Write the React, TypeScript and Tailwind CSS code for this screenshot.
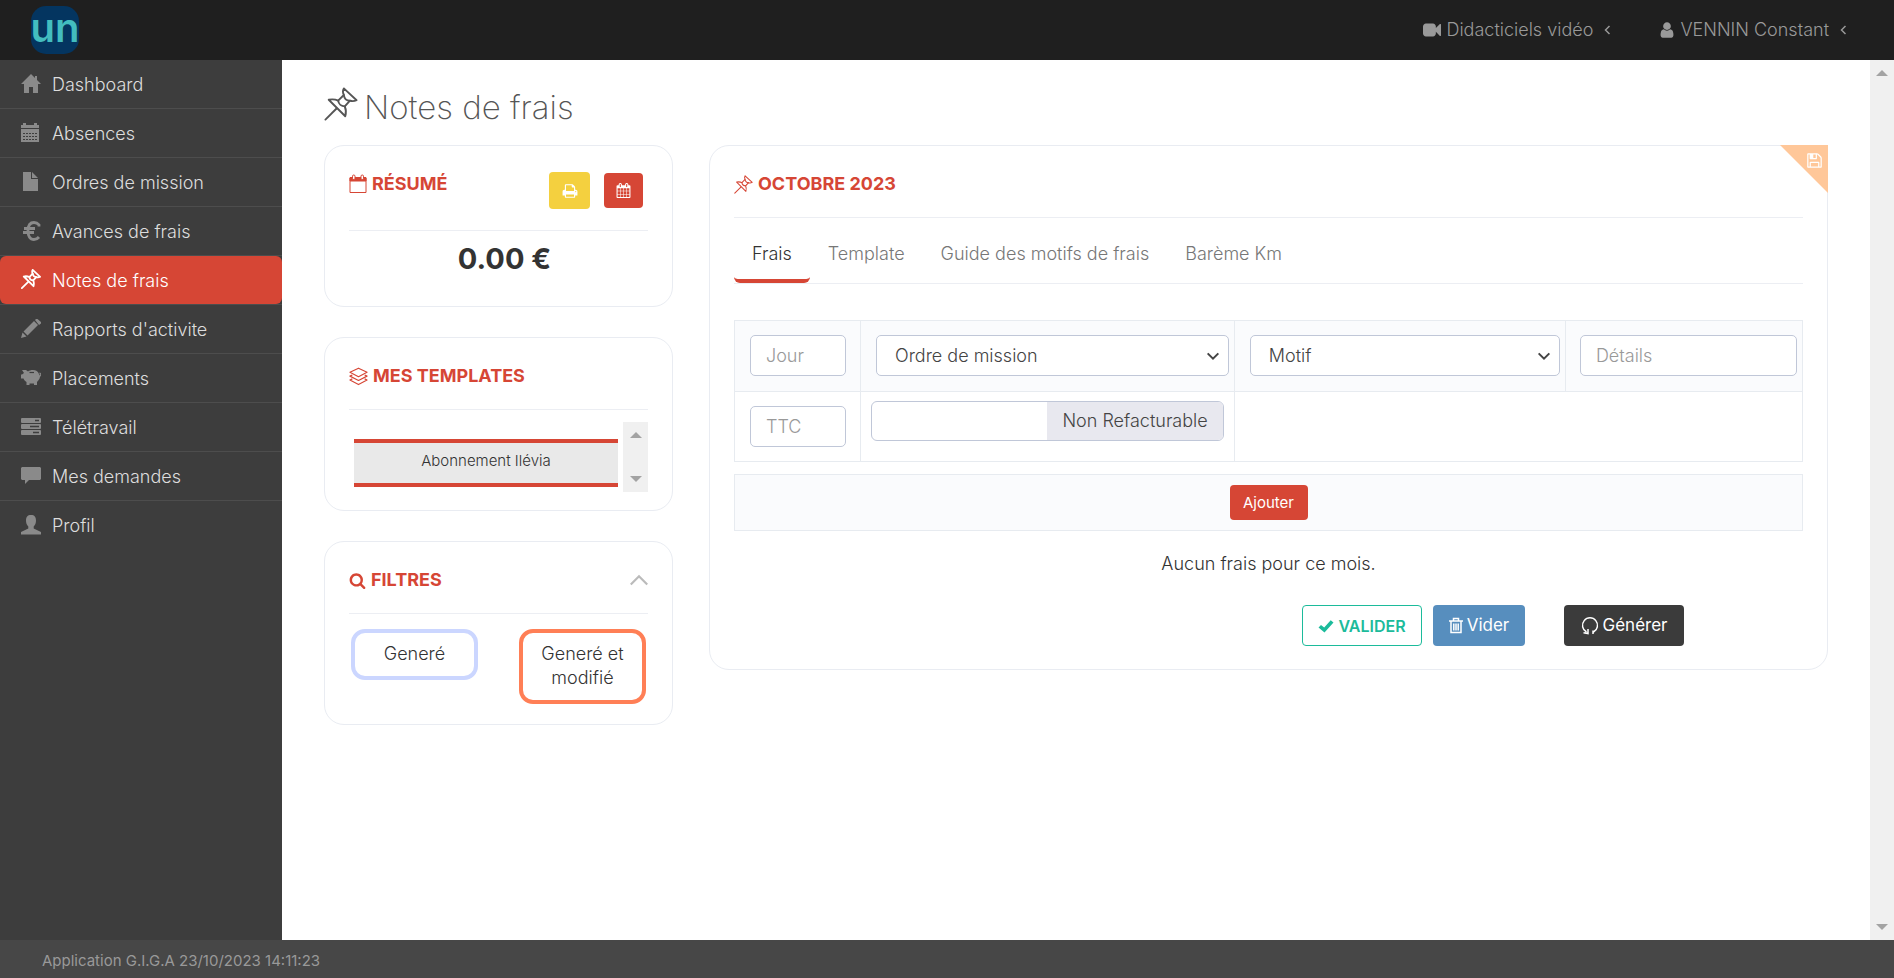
import type { ReactNode } from "react";

type IconProps = { className?: string };

const fa = (d: string) =>
  function FaIcon({ className }: IconProps) {
    return (
      <svg viewBox="0 0 1792 1792" fill="currentColor" aria-hidden="true" className={className}>
        <path d={d} />
      </svg>
    );
  };

const VideoIcon = fa(
  "M1792 352v1088q0 42-39 59-13 5-25 5-27 0-45-19l-403-403v166q0 119-84.500 203.500t-203.500 84.500h-704q-119 0-203.500-84.500t-84.500-203.500v-704q0-119 84.500-203.500t203.500-84.500h704q119 0 203.500 84.500t84.500 203.500v165l403-402q18-19 45-19 12 0 25 5 39 17 39 59z",
);
const UserIcon = fa(
  "M1536 1399q0 109-62.500 187t-150.500 78h-854q-88 0-150.500-78t-62.500-187q0-85 8.500-160.500t31.500-152 58.500-131 94-89 134.500-34.500q131 128 313 128t313-128q76 0 134.500 34.500t94 89 58.500 131 31.500 152 8.500 160.500zm-256-887q0 159-112.500 271.500t-271.500 112.500-271.500-112.500-112.500-271.500 112.500-271.500 271.500-112.500 271.500 112.500 112.500 271.500z",
);
const FloppyIcon = fa(
  "M512 1536h768v-384h-768v384zm896 0h128v-896q0-14-10-38.500t-20-34.500l-281-281q-10-10-34-20t-39-10v416q0 40-28 68t-68 28h-576q-40 0-68-28t-28-68v-416h-128v1280h128v-416q0-40 28-68t68-28h832q40 0 68 28t28 68v416zm-384-928v-320q0-13-9.500-22.500t-22.500-9.500h-192q-13 0-22.500 9.500t-9.500 22.500v320q0 13 9.500 22.500t22.500 9.500h192q13 0 22.500-9.500t9.500-22.500zm640 32v928q0 40-28 68t-68 28h-1344q-40 0-68-28t-28-68v-1344q0-40 28-68t68-28h928q40 0 88 20t76 48l280 280q28 28 48 76t20 88z",
);
const PrintIcon = fa(
  "M448 1536h896v-256h-896v256zm0-640h896v-384h-160q-40 0-68-28t-28-68v-160h-640v640zm1152 64q0-26-19-45t-45-19-45 19-19 45 19 45 45 19 45-19 19-45zm128 0v416q0 13-9.500 22.500t-22.500 9.500h-224v160q0 40-28 68t-68 28h-960q-40 0-68-28t-28-68v-160h-224q-13 0-22.500-9.500t-9.500-22.500v-416q0-79 56.500-135.500t135.500-56.500h64v-544q0-40 28-68t68-28h672q40 0 88 20t76 48l152 152q28 28 48 76t20 88v256h64q79 0 135.500 56.500t56.500 135.500z",
);
const CalendarIcon = fa(
  "M192 1664h288v-288h-288v288zm352 0h320v-288h-320v288zm-352-352h288v-320h-288v320zm352 0h320v-320h-320v320zm-352-384h288v-288h-288v288zm736 736h320v-288h-320v288zm-384-736h320v-288h-320v288zm768 736h288v-288h-288v288zm-384-352h320v-320h-320v320zm-352-864v-288q0-13-9.500-22.500t-22.500-9.500h-64q-13 0-22.500 9.500t-9.500 22.500v288q0 13 9.500 22.500t22.500 9.500h64q13 0 22.500-9.500t9.500-22.500zm736 864h288v-320h-288v320zm-384-384h320v-288h-320v288zm384 0h288v-288h-288v288zm32-480v-288q0-13-9.500-22.500t-22.500-9.500h-64q-13 0-22.500 9.500t-9.500 22.500v288q0 13 9.500 22.500t22.500 9.500h64q13 0 22.500-9.500t9.500-22.500zm384-64v1280q0 52-38 90t-90 38h-1408q-52 0-90-38t-38-90v-1280q0-52 38-90t90-38h128v-96q0-66 47-113t113-47h64q66 0 113 47t47 113v96h384v-96q0-66 47-113t113-47h64q66 0 113 47t47 113v96h128q52 0 90 38t38 90z",
);
const SearchIcon = fa(
  "M1216 832q0-185-131.500-316.500t-316.500-131.500-316.500 131.500-131.500 316.500 131.500 316.500 316.500 131.500 316.500-131.500 131.500-316.500zm512 832q0 52-38 90t-90 38q-54 0-90-38l-343-342q-179 124-399 124-143 0-273.500-55.500t-225-150-150-225-55.500-273.500 55.500-273.500 150-225 225-150 273.500-55.500 273.500 55.500 225 150 150 225 55.500 273.500q0 220-124 399l343 343q37 37 37 90z",
);

function Glyph({ children, className = "size-5" }: { children: ReactNode; className?: string }) {
  return (
    <svg viewBox="0 0 20 20" fill="currentColor" aria-hidden="true" className={className}>
      {children}
    </svg>
  );
}

function PinIcon({ className, weight }: IconProps & { weight: number }) {
  return (
    <svg
      viewBox="0 0 36 36"
      fill="none"
      stroke="currentColor"
      strokeWidth={weight}
      strokeLinejoin="round"
      strokeLinecap="round"
      aria-hidden="true"
      className={className}
    >
      <path d="M1.500 34.500 13 23" />
      <path d="M5 13.500c3.500-.8 7-.5 10 1l6-6c-1.200-2.500-1.200-5 0-7L34.500 14c-2.500 1.200-5 1.200-7 .5l-5.500 6c1.500 3.500 1.500 7 .5 10.500z" />
      <path d="M15 14.500c.5 3.500 3.500 6 7 6M21 8.500c.5 3.500 3 6 6.500 6" />
    </svg>
  );
}

function OutlineCalendarIcon({ className }: IconProps) {
  return (
    <svg viewBox="0 0 18 20" fill="none" stroke="currentColor" aria-hidden="true" className={className}>
      <path d="M1 4h16v14.500H1z" />
      <path d="M1 3.500h16V7H1z" fill="currentColor" />
      <rect x="3.500" y="1" width="2.500" height="4.500" rx="1.200" fill="#fff" />
      <rect x="12" y="1" width="2.500" height="4.500" rx="1.200" fill="#fff" />
    </svg>
  );
}

function SheetsIcon({ className }: IconProps) {
  return (
    <svg viewBox="0 0 20 20" fill="none" stroke="currentColor" strokeWidth="1.200" strokeLinejoin="round" aria-hidden="true" className={className}>
      <path d="M10 1.200 19 5.600 10 10.200 1 5.600z" />
      <path d="M3.500 8.300 1 9.600l9 4.600 9-4.600-2.500-1.300M3.500 12.500 1 13.800l9 4.700 9-4.700-2.500-1.300" />
    </svg>
  );
}

function Chevron({ className, d }: IconProps & { d: string }) {
  return (
    <svg
      viewBox="0 0 24 24"
      fill="none"
      stroke="currentColor"
      strokeWidth={3}
      aria-hidden="true"
      className={className}
    >
      <path d={d} />
    </svg>
  );
}

const menu: { label: string; icon: ReactNode; active?: boolean }[] = [
  {
    label: "Dashboard",
    icon: (
      <Glyph>
        <path d="M10 0 0 10h3v9h5v-6h4v6h5v-9h3l-4-4V2h-2v2z" />
      </Glyph>
    ),
  },
  {
    label: "Absences",
    icon: (
      <Glyph>
        <path d="M0 2h2V0h3v2h8V0h3v2h2v3H0zM0 6h18v13H0z" />
        <path d="M2 10.500h14M2 13.500h14M2 16.500h14" stroke="#3d3d3d" strokeWidth="1" strokeDasharray="2 1" />
      </Glyph>
    ),
  },
  {
    label: "Ordres de mission",
    icon: (
      <Glyph>
        <path d="M2 0h8v7h7v12H2zM11 0l6 6h-6z" />
      </Glyph>
    ),
  },
  {
    label: "Avances de frais",
    icon: (
      <Glyph>
        <path
          d="M18 5.500V3.800C16.500 2 15 1.500 13 1.500 9 1.500 7 5 7 10s2 8.500 6 8.500c2 0 3.500-.7 5-2.500M3 7.500h11M2 11.500h11"
          fill="none"
          stroke="currentColor"
          strokeWidth="2.800"
        />
      </Glyph>
    ),
  },
  { label: "Notes de frais", icon: <PinIcon weight={3.2} className="size-5" />, active: true },
  {
    label: "Rapports d'activite",
    icon: (
      <Glyph>
        <path d="m0 19 1.500-5.500 4 4zM2.500 12.500 13 2l4 4L6.500 16.500zM14 1l1-1h1.500L20 3v1.500L18 6z" />
      </Glyph>
    ),
  },
  {
    label: "Placements",
    icon: (
      <Glyph className="h-5 w-[22px]">
        <path d="M1 2h4l2 1.500C8 2.500 10 2 12 2c3 0 5 1.500 6 4l.8 1.500c.7-.3.700-1.500-.3-1.500V4.500c2 0 2.500 3 .5 4.300C18.800 11 17.500 12.500 16 14v3h-3v-1.500H8.500V17h-3v-3C4 13 3 12 2.500 10.500H-1v-4h2L3 5z" />
        <path d="M8.500 4.500h4.500" stroke="#3d3d3d" strokeWidth="1.200" />
      </Glyph>
    ),
  },
  {
    label: "Télétravail",
    icon: (
      <Glyph>
        <rect x="0" y="1" width="20" height="5" rx="1" />
        <rect x="0" y="7" width="20" height="5" rx="1" />
        <rect x="0" y="13" width="20" height="5" rx="1" />
        <path d="M14 3.500h4M9 9.500h9M12 15.500h6" stroke="#3d3d3d" strokeWidth="1.500" />
      </Glyph>
    ),
  },
  {
    label: "Mes demandes",
    icon: (
      <Glyph>
        <path d="M1 1h18l1 1v11l-1 1H8l-4 4v-4H1l-1-1V2z" />
      </Glyph>
    ),
  },
  {
    label: "Profil",
    icon: (
      <Glyph>
        <path d="M10 0c3.500 0 5 2 5 5.500 0 2.500-.8 4.500-2.300 6v2L20 17v2.500H0V17l7.300-3.500v-2C5.800 10 5 8 5 5.500 5 2 6.500 0 10 0z" />
      </Glyph>
    ),
  },
];

const tabs = ["Frais", "Template", "Guide des motifs de frais", "Barème Km"];

const fieldClass = "h-[41px] rounded-[5px] border border-[#c0c7d8] bg-white text-lg font-light placeholder:text-[#999]";
const cellClass = "border border-[#e7ebf0] p-0 align-top";

function Card({ children }: { children: ReactNode }) {
  return (
    <section className="relative rounded-[20px] border border-[#e9ecf2] bg-white px-6 pt-6">{children}</section>
  );
}

function CardHeader({ icon, title, aside, tall }: { icon: ReactNode; title: string; aside?: ReactNode; tall?: boolean }) {
  return (
    <header
      className={`flex items-start justify-between border-b border-[#eceef3] ${tall ? "h-[61px]" : "h-12"}`}
    >
      <h2 className="flex h-7 items-center gap-[5px] text-lg font-bold text-[#d64635]">
        {icon}
        {title}
      </h2>
      {aside}
    </header>
  );
}

function ScrollTrack({ className }: IconProps) {
  return (
    <div aria-hidden="true" className={`flex flex-col items-center justify-between bg-[#f0f0f0] py-[10px] ${className}`}>
      <svg viewBox="0 0 12 6" className="h-[6px] w-3 fill-[#a3a3a3]">
        <path d="M0 6 6 0l6 6z" />
      </svg>
      <svg viewBox="0 0 12 6" className="h-[6px] w-3 fill-[#a3a3a3]">
        <path d="M0 0h12L6 6z" />
      </svg>
    </div>
  );
}

function SelectField({ id, label }: { id: string; label: string }) {
  return (
    <div className="grid items-center pt-[14px] pr-[5px] pl-[15px]">
      <select
        id={id}
        aria-label={label}
        className={`${fieldClass} col-start-1 row-start-1 w-full appearance-none pl-[18px] text-[#444]`}
      >
        <option>{label}</option>
      </select>
      <Chevron
        d="m4 8 8 8 8-8"
        className="pointer-events-none col-start-1 row-start-1 mr-2 size-4 justify-self-end text-[#444]"
      />
    </div>
  );
}

export default function App() {
  return (
    <div className="flex h-screen flex-col bg-white font-[Inter,sans-serif] text-lg font-light text-[#333]">
      <header className="flex h-[60px] shrink-0 items-center justify-between bg-[#1f1f1f] pr-11 pl-[31px] text-[#999]">
        <a
          href="#"
          aria-label="Accueil"
          className="flex size-12 items-center justify-center rounded-[15px] bg-[#043560] pb-[5px] text-[40px] leading-none font-semibold text-[#43bdbf]"
        >
          un
        </a>
        <nav className="flex items-center gap-11">
          <a href="#" className="flex items-center">
            <VideoIcon className="mr-[5px] size-[18px]" />
            Didacticiels vidéo
            <Chevron d="m15 4-8 8 8 8" className="ml-[9px] size-3" />
          </a>
          <a href="#" className="flex items-center">
            <UserIcon className="mr-1 size-[18px]" />
            VENNIN Constant
            <Chevron d="m15 4-8 8 8 8" className="ml-[9px] size-3" />
          </a>
        </nav>
      </header>

      <div className="flex min-h-0 flex-1">
        <aside className="w-[282px] shrink-0 bg-[#3d3d3d]">
          <nav>
            <ul>
              {menu.map(({ label, icon, active }) => (
                <li key={label} className="h-[49px] border-b border-[#4d4d4d] last:border-b-0">
                  <a
                    href="#"
                    className={
                      active
                        ? "flex h-12 items-center gap-[11px] rounded-md bg-[#d64635] pt-[2px] pl-[21px] text-white"
                        : "flex h-12 items-center gap-[11px] pt-[2px] pl-[21px] text-[#ddd]"
                    }
                  >
                    <span className={active ? "flex w-5 justify-center pb-[5px]" : "flex w-5 justify-center pb-[3px] text-[#8a8a8a]"}>
                      {icon}
                    </span>
                    {label}
                  </a>
                </li>
              ))}
            </ul>
          </nav>
        </aside>

        <main className="min-w-0 flex-1 px-[42px] pt-6">
          <h1 className="flex h-[61px] items-start gap-[6px] text-[33px] leading-[46px] font-extralight text-[#555]">
            <PinIcon weight={2} className="mt-[3px] size-[34px]" />
            Notes de frais
          </h1>

          <div className="flex items-start gap-9">
            <div className="flex w-[349px] shrink-0 flex-col gap-[30px]">
              <Card>
                <CardHeader
                  tall
                  title="RÉSUMÉ"
                  icon={<OutlineCalendarIcon className="h-5 w-[18px]" />}
                  aside={
                    <div className="mr-[5px] flex items-center gap-[14px] pt-[2px] text-white">
                      <button
                        type="button"
                        aria-label="Imprimer"
                        className="flex h-[37px] w-[41px] items-center justify-center rounded bg-[#f4d03f]"
                      >
                        <PrintIcon className="size-4" />
                      </button>
                      <button
                        type="button"
                        aria-label="Calendrier"
                        className="flex h-[35px] w-[39px] items-center justify-center rounded bg-[#d64635]"
                      >
                        <CalendarIcon className="size-[15px]" />
                      </button>
                    </div>
                  }
                />
                <p className="pt-[5px] pb-[25px] pl-3 text-center text-[29px] leading-[45px] font-bold">0.00 €</p>
              </Card>

              <Card>
                <CardHeader title="MES TEMPLATES" icon={<SheetsIcon className="size-[19px]" />} />
                <div className="mt-3 mb-[18px] flex h-[70px] gap-[5px] pl-[5px]">
                  <div className="flex-1 pt-[17px]">
                    <button
                      type="button"
                      className="h-12 w-full border-y-4 border-[#d64635] bg-[#e9e9e9] pb-1 text-[15px]"
                    >
                      Abonnement Ilévia
                    </button>
                  </div>
                  <ScrollTrack className="w-[25px]" />
                </div>
              </Card>

              <Card>
                <CardHeader
                  title="FILTRES"
                  icon={<SearchIcon className="size-[17px]" />}
                  aside={
                    <button type="button" aria-label="Replier" className="mt-[5px] text-[#bbb]">
                      <Chevron d="m1 18 11-11 11 11" className="size-[18px]" />
                    </button>
                  }
                />
                <div className="flex items-start justify-between px-[2px] pt-[15px] pb-5">
                  <button
                    type="button"
                    className="w-[127px] rounded-[14px] border-4 border-[#cbd6ff] pt-[9px] pb-[10px] leading-6"
                  >
                    Generé
                  </button>
                  <button
                    type="button"
                    className="w-[127px] rounded-[14px] border-4 border-[#ff7f56] px-4 pt-[9px] pb-[10px] leading-6"
                  >
                    Generé et modifié
                  </button>
                </div>
              </Card>
            </div>

            <div className="min-w-0 flex-1">
              <Card>
                <button
                  type="button"
                  aria-label="Enregistrer"
                  className="absolute -top-px -right-px flex size-12 items-start justify-end bg-[#ffc799] pt-[7px] pr-[5px] text-white [clip-path:polygon(0_0,100%_0,100%_100%)]"
                >
                  <FloppyIcon className="size-[17px]" />
                </button>
                <CardHeader title="OCTOBRE 2023" icon={<PinIcon weight={2} className="size-[19px]" />} />

                <div role="tablist" className="mt-[11px] flex h-[55px] border-b border-[#eceef3]">
                  {tabs.map((tab, i) => (
                    <button
                      key={tab}
                      type="button"
                      role="tab"
                      aria-selected={i === 0}
                      className={
                        i === 0
                          ? "rounded-md border-b-4 border-[#d64635] px-[18px] text-[#333]"
                          : "border-b-4 border-transparent px-[18px] text-[#777]"
                      }
                    >
                      {tab}
                    </button>
                  ))}
                </div>

                <table className="mt-9 w-full table-fixed border-collapse">
                  <colgroup>
                    <col className="w-[126px]" />
                    <col className="w-[35%]" />
                    <col className="w-[31%]" />
                    <col />
                  </colgroup>
                  <tbody>
                    <tr className="h-[71px] bg-[#fafbfd]">
                      <td className={cellClass}>
                        <div className="pt-[14px] pr-[14px] pl-[15px]">
                          <input aria-label="Jour" placeholder="Jour" className={`${fieldClass} w-full px-[15px]`} />
                        </div>
                      </td>
                      <td className={cellClass}>
                        <SelectField id="mission" label="Ordre de mission" />
                      </td>
                      <td className={cellClass}>
                        <SelectField id="motif" label="Motif" />
                      </td>
                      <td className={cellClass}>
                        <div className="pt-[14px] pr-[5px] pl-[14px]">
                          <input aria-label="Détails" placeholder="Détails" className={`${fieldClass} w-full px-[15px]`} />
                        </div>
                      </td>
                    </tr>
                    <tr className="h-[70px]">
                      <td className={cellClass}>
                        <div className="pt-[14px] pr-[14px] pl-[15px]">
                          <input aria-label="TTC" placeholder="TTC" className={`${fieldClass} w-full px-[15px]`} />
                        </div>
                      </td>
                      <td className={cellClass}>
                        <div className="pt-[9px] pr-[10px] pl-[10px]">
                          <button
                            type="button"
                            role="switch"
                            aria-checked="false"
                            className="flex h-10 w-full overflow-hidden rounded-md border border-[#c0c7d8] bg-white text-[#444]"
                          >
                            <span className="ml-auto flex h-full w-1/2 items-center justify-center bg-[#e8e8ef]">
                              Non Refacturable
                            </span>
                          </button>
                        </div>
                      </td>
                      <td className={cellClass} colSpan={2} />
                    </tr>
                  </tbody>
                </table>

                <div className="mt-3 flex h-[57px] items-center justify-center border border-[#e7ebf0] bg-[#fafbfd]">
                  <button type="button" className="h-[35px] w-[78px] rounded bg-[#d64635] text-[15px] font-normal text-white">
                    Ajouter
                  </button>
                </div>

                <p className="mt-[21px] text-center leading-6">Aucun frais pour ce mois.</p>

                <div className="mt-[29px] mr-[119px] mb-[23px] flex justify-end">
                  <button
                    type="button"
                    className="flex h-[41px] w-[120px] items-center justify-center gap-1 rounded border border-[#1cbb9b] text-base font-semibold text-[#1cbb9b]"
                  >
                    <svg viewBox="0 0 16 16" fill="currentColor" aria-hidden="true" className="size-4">
                      <path d="M.5 9.500 3 7l3.200 2.500 6.500-7.200L15.500 4.500 6.500 14.500z" />
                    </svg>
                    VALIDER
                  </button>
                  <button
                    type="button"
                    className="ml-[11px] flex h-[41px] w-[92px] items-center justify-center gap-1 rounded bg-[#578ebe] text-[17px] font-normal text-white"
                  >
                    <svg viewBox="0 0 14 17" fill="none" stroke="currentColor" strokeWidth="1.500" aria-hidden="true" className="h-[17px] w-[14px]">
                      <path d="M0 4h14M4.500 4V1.500h5V4M2 4v11.500h10V4M4.800 6.500v7M7 6.500v7M9.200 6.500v7" />
                    </svg>
                    Vider
                  </button>
                  <button
                    type="button"
                    className="ml-[39px] flex h-[41px] w-[120px] items-center justify-center gap-1 rounded bg-[#3b3b3b] text-[17px] font-normal text-white"
                  >
                    <svg viewBox="0 0 18 18" fill="none" stroke="currentColor" strokeWidth="1.500" aria-hidden="true" className="size-[18px]">
                      <path d="M5.500 15A7.500 7.500 0 1 1 12.500 15M2.500 15.800l4.500.7V12M12 17v-3.500" />
                    </svg>
                    Générer
                  </button>
                </div>
              </Card>
            </div>
          </div>
        </main>
        <ScrollTrack className="w-6 shrink-0" />
      </div>

      <footer className="flex h-[38px] shrink-0 items-center bg-[#474747] pt-1 pl-[42px] text-[15px] font-normal text-[#999]">
        Application G.I.G.A 23/10/2023 14:11:23
      </footer>
    </div>
  );
}
